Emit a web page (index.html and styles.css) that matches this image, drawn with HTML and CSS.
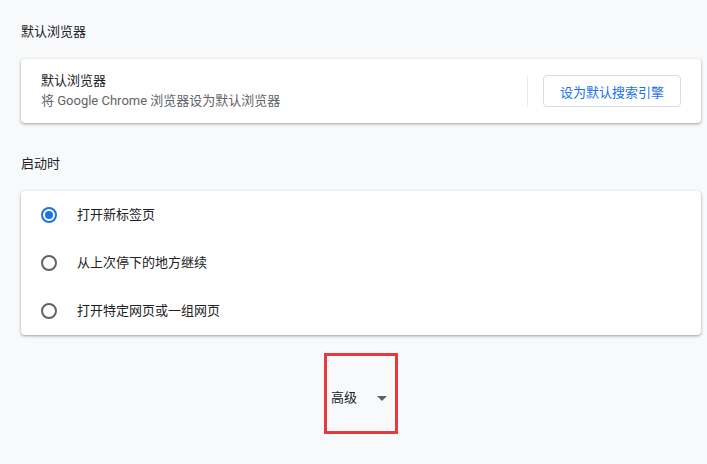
FILE: index.html
```html
<!DOCTYPE html>
<html lang="zh-CN">
<head>
<meta charset="utf-8">
<title>设置</title>
<link rel="stylesheet" href="styles.css">
</head>
<body>
<main class="page">
  <h2 class="section-title">默认浏览器</h2>
  <section class="card default-card">
    <div class="default-text">
      <div class="primary">默认浏览器</div>
      <div class="secondary">将 Google Chrome 浏览器设为默认浏览器</div>
    </div>
    <div class="separator"></div>
    <button class="action-button">设为默认搜索引擎</button>
  </section>

  <h2 class="section-title second">启动时</h2>
  <section class="card radio-card">
    <label class="radio-row"><span class="radio checked"></span><span class="radio-label">打开新标签页</span></label>
    <label class="radio-row"><span class="radio"></span><span class="radio-label">从上次停下的地方继续</span></label>
    <label class="radio-row"><span class="radio"></span><span class="radio-label">打开特定网页或一组网页</span></label>
  </section>

  <div class="advanced-wrap">
    <div class="advanced">
      <span class="advanced-label">高级</span>
      <span class="arrow"></span>
    </div>
  </div>
</main>
</body>
</html>
```
FILE: styles.css
```css
html, body {
  margin: 0;
  padding: 0;
  background: #f8f9fa;
}
body {
  font-family: Roboto, "Noto Sans CJK SC", "Microsoft YaHei", sans-serif;
  font-size: 13px;
  color: #202124;
}
.page {
  padding: 0 6px 0 21px;
}
.section-title {
  margin: 0;
  padding-top: 22px;
  font-size: 13px;
  font-weight: 400;
  line-height: 20px;
  color: #202124;
  margin-bottom: 17px;
}
.section-title.second {
  padding-top: 31px;
}
.card {
  background: #fff;
  border-radius: 4px;
  box-shadow: 0 1px 2px 0 rgba(60, 64, 67, 0.3), 0 1px 3px 1px rgba(60, 64, 67, 0.15);
}
.default-card {
  height: 64px;
  display: flex;
  align-items: center;
  padding: 0 20px;
  box-sizing: border-box;
}
.default-text {
  flex: 1;
  line-height: 20px;
}
.primary {
  color: #202124;
}
.secondary {
  color: #5f6368;
}
.separator {
  width: 1px;
  height: 32px;
  background: #e8eaed;
  margin-right: 15px;
}
.action-button {
  height: 32px;
  padding: 0 16px;
  border: 1px solid #dadce0;
  border-radius: 4px;
  background: #fff;
  color: #1a73e8;
  font-family: inherit;
  font-size: 13px;
  cursor: pointer;
}
.radio-card {
  display: flex;
  flex-direction: column;
}
.radio-row {
  height: 48px;
  display: flex;
  align-items: center;
  padding-left: 20px;
}
.radio {
  width: 16px;
  height: 16px;
  box-sizing: border-box;
  border: 2px solid #5f6368;
  border-radius: 50%;
  display: flex;
  align-items: center;
  justify-content: center;
  margin-right: 20px;
}
.radio.checked {
  border-color: #1a73e8;
}
.radio.checked::after {
  content: "";
  width: 8px;
  height: 8px;
  border-radius: 50%;
  background: #1a73e8;
}
.radio-label {
  line-height: 20px;
}
.advanced-wrap {
  display: flex;
  justify-content: center;
  padding-top: 18px;
}
.advanced {
  width: 74px;
  height: 81px;
  box-sizing: border-box;
  border: 3px solid #e8393c;
  display: flex;
  align-items: center;
  padding-left: 4px;
  padding-top: 8px;
}
.advanced-label {
  line-height: 20px;
}
.arrow {
  width: 0;
  height: 0;
  border-left: 5px solid transparent;
  border-right: 5px solid transparent;
  border-top: 5px solid #5f6368;
  margin-left: 20px;
  margin-top: 2px;
}
```
